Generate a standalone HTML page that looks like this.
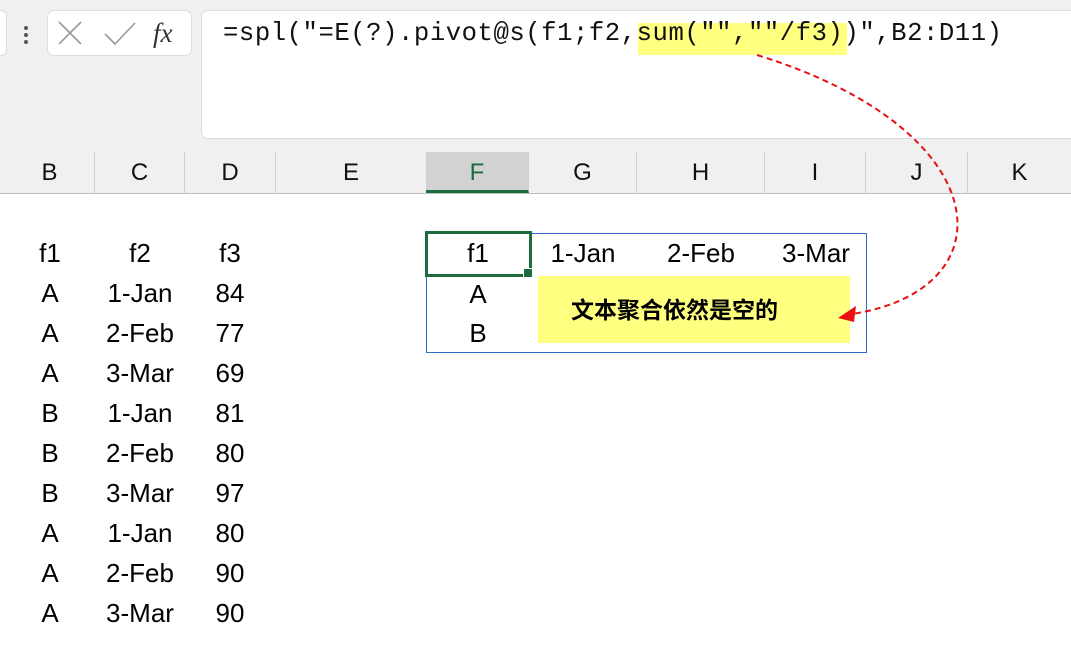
<!DOCTYPE html>
<html><head><meta charset="utf-8"><style>
body{margin:0;width:1071px;height:647px;background:#fff;position:relative;overflow:hidden;font-family:"Liberation Sans",sans-serif}
.a{position:absolute}
.top{left:0;top:0;width:1071px;height:152px;background:#f0f0f0}
.hdr{left:0;top:152px;width:1071px;height:41px;background:#f0f0f0;border-bottom:1px solid #bdbdbd}
.col{position:absolute;top:152px;height:41px;line-height:41px;text-align:center;font-size:24px;color:#111;border-right:1px solid #d0d0d0}
.c{position:absolute;font-size:26px;text-align:center;color:#000;width:80px}
</style></head><body>
<div class="a top"></div>
<div class="a" style="left:-10px;top:10px;width:15px;height:44px;background:#fff;border:1px solid #ddd;border-radius:6px"></div>
<div class="a" style="left:24px;top:26px;width:4px;height:18px;border-left:4px dotted #555"></div>
<div class="a" style="left:47px;top:10px;width:143px;height:44px;background:#fff;border:1px solid #ddd;border-radius:7px"></div>
<svg class="a" style="left:55px;top:18px" width="130" height="30"><path d="M4 4L26 26M26 4L4 26" stroke="#999" stroke-width="1.6"/><path d="M50 16L60 26L80 5" stroke="#999" stroke-width="1.6" fill="none"/><text x="98" y="24" font-family="Liberation Serif" font-style="italic" font-size="27" fill="#333">fx</text></svg>
<div class="a" style="left:201px;top:10px;width:880px;height:127px;background:#fff;border:1px solid #ddd;border-radius:7px"></div>
<div class="a" style="left:638px;top:23px;width:209px;height:32px;background:#ffff80"></div>
<div class="a" style="left:223px;top:19px;font-family:'Liberation Mono',monospace;font-size:25.6px;letter-spacing:0.55px;color:#111;white-space:pre">=spl("=E(?).pivot@s(f1;f2,sum("",""/f3))",B2:D11)</div>
<div class="a hdr"></div>
<div class="col" style="left:5px;width:89px">B</div>
<div class="col" style="left:95px;width:89px">C</div>
<div class="col" style="left:185px;width:90px">D</div>
<div class="col" style="left:276px;width:150px">E</div>
<div class="col" style="left:426px;width:102px;background:#d2d2d2;color:#1e6b3e;border-bottom:3px solid #1e6b3e;height:38px">F</div>
<div class="col" style="left:529px;width:107px">G</div>
<div class="col" style="left:637px;width:127px">H</div>
<div class="col" style="left:765px;width:100px">I</div>
<div class="col" style="left:866px;width:101px">J</div>
<div class="col" style="left:968px;width:103px;border:0">K</div>

<div class="a" style="left:426px;top:233px;width:439px;height:118px;border:1px solid #2f6cc8"></div>
<div class="a" style="left:425px;top:231px;width:101px;height:40px;border:3px solid #1e6b3e"></div>
<div class="a" style="left:523px;top:268px;width:8px;height:8px;background:#1e6b3e;border:1px solid #fff"></div>
<div class="a" style="left:538px;top:276px;width:312px;height:67px;background:#ffff80"></div>
<div class="a" style="left:571px;top:296px;font-family:'Liberation Sans','Noto Sans CJK SC',sans-serif;font-weight:bold;font-size:23px;line-height:28px">文本聚合依然是空的</div>
<div class="c" style="left:438px;top:238px">f1</div>
<div class="c" style="left:438px;top:279px">A</div>
<div class="c" style="left:438px;top:318px">B</div>
<div class="c" style="left:543px;top:238px">1-Jan</div>
<div class="c" style="left:661px;top:238px">2-Feb</div>
<div class="c" style="left:776px;top:238px">3-Mar</div>

<div id="d"></div>
<svg class="a" style="left:0;top:0" width="1071" height="647"><path d="M757 55C1000 130 1010 290 852 314" stroke="#e81010" stroke-width="2" stroke-dasharray="6,4" fill="none"/><path d="M838 318L856 306L854 322Z" fill="#e81010"/></svg>
<script>
var r=[["f1","f2","f3"],["A","1-Jan","84"],["A","2-Feb","77"],["A","3-Mar","69"],["B","1-Jan","81"],["B","2-Feb","80"],["B","3-Mar","97"],["A","1-Jan","80"],["A","2-Feb","90"],["A","3-Mar","90"]];
var h="";r.forEach(function(w,i){var y=238+i*40;h+='<div class="c" style="left:10px;top:'+y+'px">'+w[0]+'</div><div class="c" style="left:100px;top:'+y+'px">'+w[1]+'</div><div class="c" style="left:190px;top:'+y+'px">'+w[2]+'</div>';});
document.getElementById("d").innerHTML=h;
</script>
</body></html>
